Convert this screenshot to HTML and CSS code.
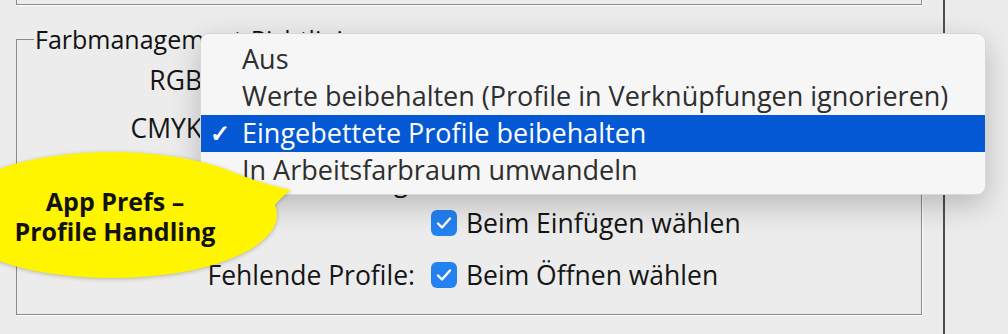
FILE: index.html
```html
<!DOCTYPE html>
<html lang="de">
<head>
    <meta charset="UTF-8">
    <meta name="viewport" content="width=device-width, initial-scale=1.0">
    <title>Farbeinstellungen</title>
    <link rel="stylesheet" href="styles.css">
</head>
<body>
    <div class="window">
        <div class="panel">
            <div class="prev-group"></div>
            <fieldset class="group">
                <legend>Farbmanagement-Richtlinien</legend>
                <div class="policy-row">
                    <span class="policy-label">RGB:</span>
                </div>
                <div class="policy-row">
                    <span class="policy-label">CMYK:</span>
                </div>
                <div class="check-section">
                    <div class="check-label">Profilabweichung:</div>
                    <div class="check-list">
                        <label class="check">
                            <span class="box"><svg viewBox="0 0 26 26" width="26" height="26"><polyline points="7,13.5 11,17.5 19,8.5"/></svg></span>
                            Beim Öffnen wählen
                        </label>
                        <label class="check">
                            <span class="box"><svg viewBox="0 0 26 26" width="26" height="26"><polyline points="7,13.5 11,17.5 19,8.5"/></svg></span>
                            Beim Einfügen wählen
                        </label>
                    </div>
                    <div class="check-label">Fehlende Profile:</div>
                    <div class="check-list">
                        <label class="check">
                            <span class="box"><svg viewBox="0 0 26 26" width="26" height="26"><polyline points="7,13.5 11,17.5 19,8.5"/></svg></span>
                            Beim Öffnen wählen
                        </label>
                    </div>
                </div>
            </fieldset>
        </div>
        <div class="edge"></div>
    </div>

    <!-- offenes Popup-Menü über der CMYK-Zeile -->
    <div class="menu">
        <div class="menu-item"><span class="tick"></span>Aus</div>
        <div class="menu-item"><span class="tick"></span>Werte beibehalten (Profile in Verknüpfungen ignorieren)</div>
        <div class="menu-item selected"><span class="tick">✓</span>Eingebettete Profile beibehalten</div>
        <div class="menu-item"><span class="tick"></span>In Arbeitsfarbraum umwandeln</div>
    </div>

    <!-- gelbe Sprechblase -->
    <div class="callout">
        <svg class="bubble" viewBox="0 0 300 150" width="300" height="150">
            <g class="bubble-shape">
                <ellipse cx="112" cy="75" rx="165" ry="63"/>
                <path d="M 222 28 Q 264 45 291 50 Q 281 57 273 67 L 235 60 Z"/>
            </g>
        </svg>
        <div class="callout-text">App Prefs –<br>Profile Handling</div>
    </div>
</body>
</html>
```

FILE: styles.css
```css
body {
    margin: 0;
    height: 334px;
    overflow: hidden;
    background-color: #ececec;
    font-family: "Open Sans", "Noto Sans", sans-serif;
    font-size: 26.5px;
    color: #151515;
}
.window {
    display: flex;
    height: 334px;
}
.panel {
    width: 943px;
    padding: 0 21px 0 16px;
    box-sizing: border-box;
}
.edge {
    width: 2px;
    background-color: #4e4e4e;
}
.prev-group {
    height: 19px;
    margin-top: -16px;
    border: 1px solid #8a8a8a;
    box-shadow: 1px 1px 0 #fff;
}
.group {
    margin: 19px 0 0;
    padding: 2px 0 18px;
    min-width: 0;
    border: 1px solid #8a8a8a;
    box-shadow: 1px 1px 0 #fff;
}
.group legend {
    margin-left: 17px;
    padding: 0 2px 0 1px;
    font-size: 25px;
    line-height: 30px;
    color: #111;
}
.policy-row {
    display: flex;
    align-items: center;
    height: 48px;
}
.policy-label {
    width: 192px;
    text-align: right;
}
.check-section {
    display: grid;
    grid-template-columns: 398px auto;
    column-gap: 16px;
    row-gap: 10px;
    margin-top: 8px;
}
.check-label {
    text-align: right;
    line-height: 42px;
}
.check-list {
    display: flex;
    flex-direction: column;
}
.check {
    display: flex;
    align-items: center;
    gap: 9px;
    height: 42px;
}
.box {
    width: 26px;
    height: 26px;
    border-radius: 6px;
    background-color: #2381f0;
}
.box svg {
    display: block;
}
.box polyline {
    fill: none;
    stroke: #fff;
    stroke-width: 2.4;
    stroke-linecap: round;
    stroke-linejoin: round;
}
.menu {
    position: absolute;
    left: 200px;
    top: 33px;
    width: 786px;
    padding: 7px 0 5px;
    box-sizing: border-box;
    background-color: #f6f6f6;
    border: 1px solid rgba(0,0,0,0.12);
    border-radius: 9px;
    box-shadow: 0 10px 30px rgba(0,0,0,0.22);
    font-size: 27px;
    color: #2e2e2e;
}
.menu-item {
    display: flex;
    height: 37px;
    line-height: 36px;
    white-space: nowrap;
}
.menu-item.selected {
    background-color: #0558d4;
    color: #fff;
}
.tick {
    width: 32px;
    padding-left: 9px;
    font-weight: 700;
    font-size: 24px;
}
.callout {
    position: absolute;
    left: 0;
    top: 140px;
    width: 300px;
    height: 150px;
}
.bubble {
    position: absolute;
    left: 0;
    top: 0;
}
.bubble-shape {
    fill: #fff500;
    filter: drop-shadow(0 1px 2px rgba(90,80,0,0.35));
}
.callout-text {
    position: relative;
    width: 230px;
    padding-top: 46px;
    text-align: center;
    font-weight: 700;
    font-size: 25px;
    line-height: 30px;
    color: #111;
}
```
